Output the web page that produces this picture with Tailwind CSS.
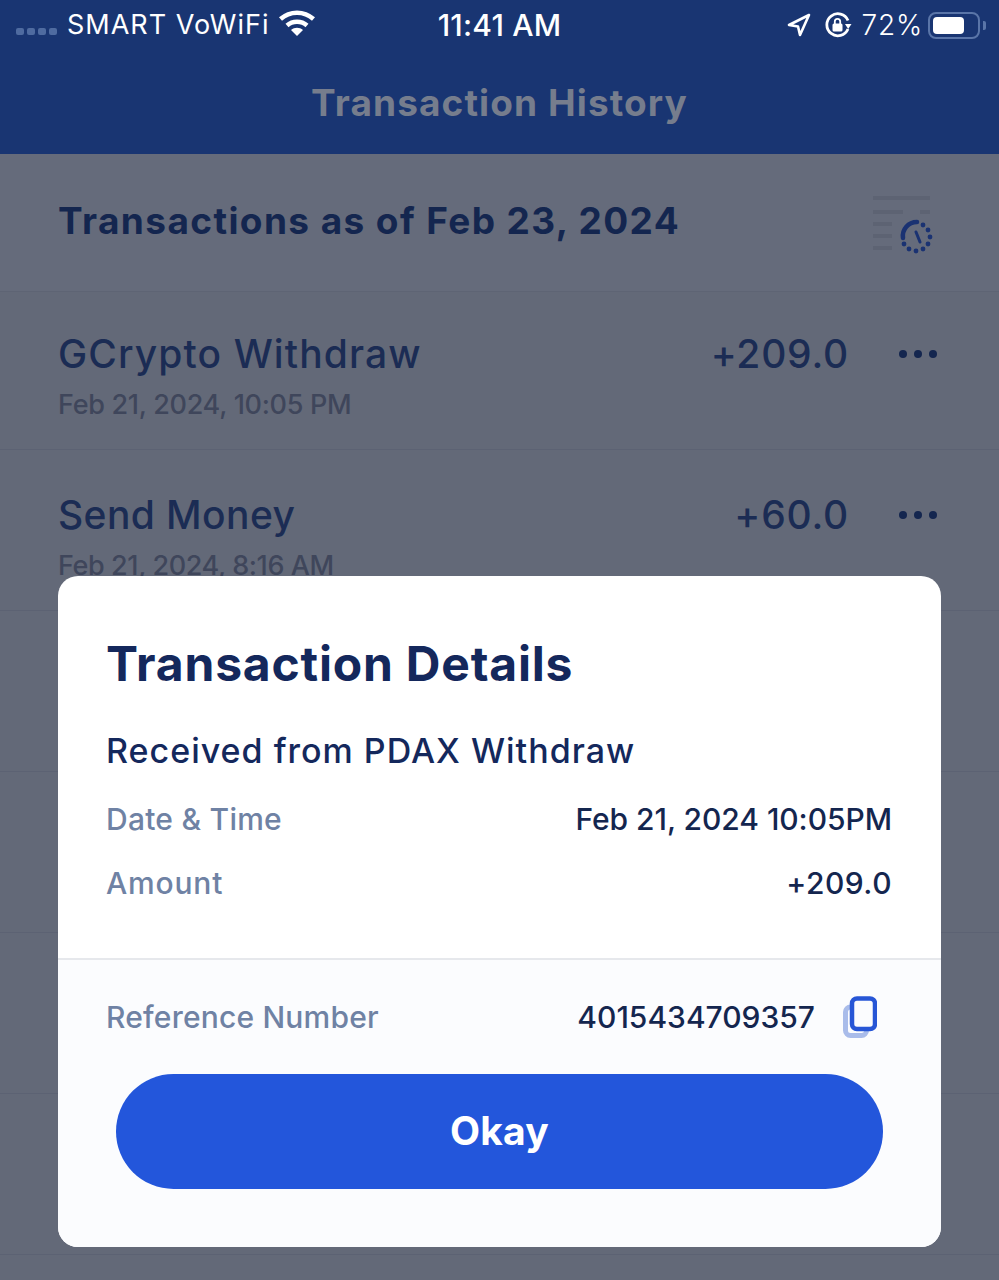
<!DOCTYPE html>
<html lang="en">
<head>
    <meta charset="UTF-8">
    <meta name="viewport" content="width=device-width, initial-scale=1.0">
    <title>Transaction History</title>
    <script src="https://cdn.jsdelivr.net/npm/@tailwindcss/browser@4"></script>
</head>
<body class="bg-[#636978] font-['Inter','Noto_Sans',sans-serif]">
<div class="relative w-[999px] h-[1280px] overflow-hidden">

    <!-- blue header with status bar -->
    <header class="h-[154px] bg-[#193572] flex flex-col">
        <div class="h-[50px] flex items-center text-white text-[28px] relative">
            <div class="flex items-center gap-[3px] ml-[16px] mt-[12px]">
                <span class="w-[8px] h-[7px] rounded-[2px] bg-[#4f6ba0]"></span>
                <span class="w-[8px] h-[7px] rounded-[2px] bg-[#4f6ba0]"></span>
                <span class="w-[8px] h-[7px] rounded-[2px] bg-[#4f6ba0]"></span>
                <span class="w-[8px] h-[7px] rounded-[2px] bg-[#4f6ba0]"></span>
            </div>
            <span class="ml-[10px] text-[27px] tracking-[1px]">SMART VoWiFi</span>
            <svg class="ml-[9px] -mt-[4px]" width="38" height="28" viewBox="0 0 38 28" fill="none" stroke="#fff" stroke-width="4.5">
                <path d="M2.5 10 C12 1.5 26 1.5 35.500 10"/>
                <path d="M9 16.500 C14.500 11.500 23.500 11.500 29 16.500"/>
                <path d="M19 27 L13 21 C16.500 18 21.500 18 25 21 Z" fill="#fff" stroke="none"/>
            </svg>
            <span class="absolute left-0 right-0 text-center text-[30px] font-medium tracking-[0.2px]">11:41 AM</span>
            <div class="ml-auto flex items-center mr-[13px]">
                <svg width="24" height="24" viewBox="0 0 24 24" fill="none" stroke="#fff" stroke-width="2.6" stroke-linejoin="round">
                    <path d="M22 2 L2 12 L11 13.500 L13 22 Z"/>
                </svg>
                <svg class="ml-[13px]" width="28" height="28" viewBox="0 0 28 28" fill="none">
                    <path d="M24 18 A11 11 0 1 1 24 9.500" stroke="#fff" stroke-width="2.8"/>
                    <path d="M21 13 L27.500 13 L24.200 18 Z" fill="#fff"/>
                    <rect x="8.500" y="12.500" width="10" height="8" rx="1.500" fill="#fff"/>
                    <path d="M10.800 13 V10.500 A2.700 2.700 0 0 1 16.200 10.500 V13" stroke="#fff" stroke-width="1.800"/>
                </svg>
                <span class="ml-[10px] text-[28px] font-light tracking-[0.8px]">72%</span>
                <div class="ml-[5px] w-[52px] h-[27px] border-[2px] border-[#5a75a8] rounded-[8px] p-[3px]">
                    <div class="w-[31px] h-full bg-white rounded-[4px]"></div>
                </div>
                <div class="w-[3px] h-[9px] bg-[#5a75a8] rounded-r-[2px] ml-[3px]"></div>
            </div>
        </div>
        <h1 class="mt-[27px] text-center text-[37px] leading-[52px] font-bold tracking-[1.1px] text-[#767d8d]">Transaction History</h1>
    </header>

    <!-- filter bar -->
    <section class="h-[138px] bg-[#656b7b] border-b border-[#5e6474] flex items-center justify-between pl-[58px] pr-[65px]">
        <h2 class="text-[37px] font-bold tracking-[1.4px] text-[#14264f] -mt-[4px]">Transactions as of Feb 23, 2024</h2>
        <svg width="64" height="60" viewBox="0 0 64 60" fill="none" class="mt-[4px]">
            <path d="M3 3 H60 M3 17 H33 M50 17 H60 M3 29 H22 M3 41 H22 M3 53 H22" stroke="#5d6373" stroke-width="4"/>
            <path d="M33 43 A14 14 0 0 1 47 27" stroke="#1a3272" stroke-width="4.500" stroke-linecap="round"/>
            <path d="M46 37 L50 47" stroke="#1a3272" stroke-width="3" stroke-linecap="round"/>
            <g fill="#1a3272">
                <circle cx="53" cy="30" r="2.400"/><circle cx="58" cy="35" r="2.400"/><circle cx="60" cy="42" r="2.400"/>
                <circle cx="58" cy="49" r="2.400"/><circle cx="53" cy="54" r="2.400"/><circle cx="46" cy="56" r="2.400"/>
                <circle cx="39" cy="54" r="2.400"/><circle cx="34" cy="49" r="2.400"/>
            </g>
        </svg>
    </section>

    <!-- transaction rows -->
    <ul>
        <li class="h-[158px] border-b border-[#5c6273] flex justify-between pl-[58px] pr-[62px] pt-[36px]">
            <div>
                <p class="text-[39px] leading-[52px] font-medium tracking-[1.1px] text-[#1b2c54]">GCrypto Withdraw</p>
                <p class="text-[27px] leading-[36px] mt-[7px] font-medium tracking-[-0.3px] text-[#3f465b]">Feb 21, 2024, 10:05 PM</p>
            </div>
            <div class="flex items-start">
                <span class="text-[39px] leading-[52px] font-medium tracking-[0.8px] text-[#1b2c54]">+209.0</span>
                <div class="flex gap-[7px] ml-[50px] mt-[22px]">
                    <span class="w-[8px] h-[8px] rounded-full bg-[#14264f]"></span>
                    <span class="w-[8px] h-[8px] rounded-full bg-[#14264f]"></span>
                    <span class="w-[8px] h-[8px] rounded-full bg-[#14264f]"></span>
                </div>
            </div>
        </li>
        <li class="h-[161px] border-b border-[#5c6273] flex justify-between pl-[58px] pr-[62px] pt-[39px]">
            <div>
                <p class="text-[39px] leading-[52px] font-medium tracking-[0.4px] text-[#1b2c54]">Send Money</p>
                <p class="text-[27px] leading-[36px] mt-[7px] font-medium tracking-[-0.4px] text-[#3f465b]">Feb 21, 2024, 8:16 AM</p>
            </div>
            <div class="flex items-start">
                <span class="text-[39px] leading-[52px] font-medium tracking-[0.8px] text-[#1b2c54]">+60.0</span>
                <div class="flex gap-[7px] ml-[50px] mt-[22px]">
                    <span class="w-[8px] h-[8px] rounded-full bg-[#14264f]"></span>
                    <span class="w-[8px] h-[8px] rounded-full bg-[#14264f]"></span>
                    <span class="w-[8px] h-[8px] rounded-full bg-[#14264f]"></span>
                </div>
            </div>
        </li>
        <li class="h-[161px] border-b border-[#5c6273]"></li>
        <li class="h-[161px] border-b border-[#5c6273]"></li>
        <li class="h-[161px] border-b border-[#5c6273]"></li>
        <li class="h-[161px] border-b border-[#5c6273]"></li>
    </ul>

    <!-- modal -->
    <div class="absolute left-[58px] top-[576px] w-[883px] h-[671px] rounded-[20px] overflow-hidden bg-white flex flex-col">
        <div class="h-[384px] border-b-2 border-[#e6e8ec] pl-[48px] pr-[49px] pt-[58px]">
            <h3 class="text-[48px] leading-[60px] font-bold tracking-[0.8px] text-[#14285c]">Transaction Details</h3>
            <p class="mt-[35px] text-[34px] leading-[44px] font-medium tracking-[1px] text-[#14285c]">Received from PDAX Withdraw</p>
            <div class="mt-[26px] flex justify-between text-[30px] leading-[40px] font-medium">
                <span class="text-[#6f82a4] tracking-[0.25px]">Date &amp; Time</span>
                <span class="text-[#14264f] tracking-[-0.05px]">Feb 21, 2024 10:05PM</span>
            </div>
            <div class="mt-[24px] flex justify-between text-[30px] leading-[40px] font-medium">
                <span class="text-[#6f82a4] tracking-[0.8px]">Amount</span>
                <span class="text-[#14264f] tracking-[0.5px]">+209.0</span>
            </div>
        </div>
        <div class="flex-1 bg-[#fbfcfe] pl-[48px] pr-[49px]">
            <div class="flex items-center mt-[35px] h-[44px] text-[30px] font-medium">
                <span class="text-[#6f82a4] tracking-[0.2px]">Reference Number</span>
                <span class="ml-auto text-[#14264f]">4015434709357</span>
                <svg class="ml-[28px] mr-[15px]" width="34" height="42" viewBox="0 0 34 42" fill="none">
                    <rect x="2.500" y="11" width="21" height="28.500" rx="5" stroke="#a9bcea" stroke-width="5"/>
                    <rect x="9" y="2.500" width="23" height="30.500" rx="5" fill="#fbfcfe" stroke="#2756d6" stroke-width="4.500"/>
                </svg>
            </div>
            <button class="mt-[35px] ml-[10px] w-[767px] h-[115px] rounded-full bg-[#2356db] text-white text-[39px] font-bold tracking-[0.2px]">Okay</button>
        </div>
    </div>
</div>
</body>
</html>
